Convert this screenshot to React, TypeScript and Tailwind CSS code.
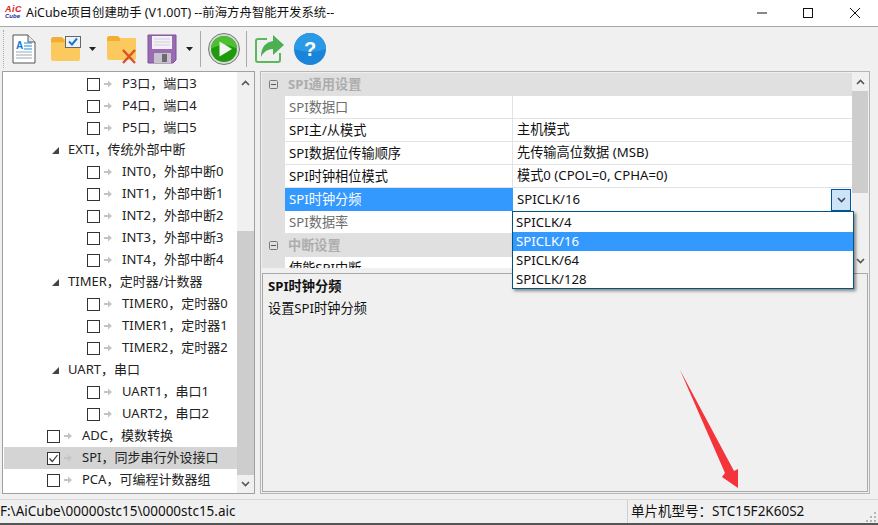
import React from 'react';

const font = 'font-["Noto_Sans","Noto_Sans_CJK_SC",sans-serif]';

type TreeRow = { label: string; level: 0 | 1 | 2; checked?: boolean; selected?: boolean };

const treeRows: TreeRow[] = [
  { label: 'P3口，端口3', level: 2 },
  { label: 'P4口，端口4', level: 2 },
  { label: 'P5口，端口5', level: 2 },
  { label: 'EXTI，传统外部中断', level: 0 },
  { label: 'INT0，外部中断0', level: 2 },
  { label: 'INT1，外部中断1', level: 2 },
  { label: 'INT2，外部中断2', level: 2 },
  { label: 'INT3，外部中断3', level: 2 },
  { label: 'INT4，外部中断4', level: 2 },
  { label: 'TIMER，定时器/计数器', level: 0 },
  { label: 'TIMER0，定时器0', level: 2 },
  { label: 'TIMER1，定时器1', level: 2 },
  { label: 'TIMER2，定时器2', level: 2 },
  { label: 'UART，串口', level: 0 },
  { label: 'UART1，串口1', level: 2 },
  { label: 'UART2，串口2', level: 2 },
  { label: 'ADC，模数转换', level: 1 },
  { label: 'SPI，同步串行外设接口', level: 1, checked: true, selected: true },
  { label: 'PCA，可编程计数器组', level: 1 },
];

function Chevron({ up, className }: { up?: boolean; className?: string }) {
  return (
    <svg width="9" height="6" viewBox="0 0 9 6" className={className}>
      <path d={up ? 'M1 5L4.5 1.5L8 5' : 'M1 1L4.5 4.5L8 1'} fill="none" stroke="currentColor" strokeWidth="1.6" />
    </svg>
  );
}

function Caret({ className }: { className?: string }) {
  return (
    <svg width="7" height="4" viewBox="0 0 7 4" className={className}>
      <path d="M0 0H7L3.5 4Z" fill="#222" />
    </svg>
  );
}

function RowArrow() {
  return (
    <svg width="8" height="8" viewBox="0 0 8 8">
      <path d="M0 3H4V0.5L8 4L4 7.5V5H0Z" fill="#c4c4c4" />
    </svg>
  );
}

function CheckBox({ checked }: { checked?: boolean }) {
  return (
    <span className="w-[13px] h-[13px] border border-[#333] bg-white flex items-center justify-center shrink-0">
      {checked && (
        <svg width="11" height="11" viewBox="0 0 11 11">
          <path d="M1.5 5.5L4.3 8.5L9.5 2" fill="none" stroke="#333" strokeWidth="1.2" />
        </svg>
      )}
    </span>
  );
}

function Tree() {
  return (
    <div className="w-[253px] h-[423px] bg-white border border-[#a0a0a0] flex">
      <div className="w-[234px] pt-[1px] pl-[1px] overflow-hidden">
        {treeRows.map((r) => (
          <div key={r.label} className={`h-[22px] flex items-center text-[13px] text-[#222] whitespace-nowrap ${r.selected ? 'bg-[#d4d4d4]' : ''}`}>
            {r.level === 0 && (
              <>
                <svg width="7" height="7" viewBox="0 0 7 7" className="ml-[48px] mr-[9px] shrink-0">
                  <path d="M7 0V7H0Z" fill="#444" />
                </svg>
                <span>{r.label}</span>
              </>
            )}
            {r.level !== 0 && (
              <>
                <span className={r.level === 2 ? 'ml-[83px]' : 'ml-[43px]'}>
                  <CheckBox checked={r.checked} />
                </span>
                <span className="ml-[4px] mr-[10px] flex"><RowArrow /></span>
                <span>{r.label}</span>
              </>
            )}
          </div>
        ))}
      </div>
      <div className="w-[17px] bg-[#f0f0f0] flex flex-col text-[#555]">
        <div className="h-[21px] flex items-center justify-center"><Chevron up /></div>
        <div className="h-[138px]" />
        <div className="h-[244px] bg-[#cdcdcd]" />
        <div className="flex-1 flex items-center justify-center"><Chevron /></div>
      </div>
    </div>
  );
}

function GroupRow({ label }: { label: string }) {
  return (
    <div className="h-[23px] flex items-center bg-[#e0e0e0]">
      <span className="w-[23px] flex justify-center">
        <svg width="9" height="9" viewBox="0 0 9 9">
          <rect x="0.5" y="0.5" width="8" height="8" rx="1" fill="none" stroke="#777" />
          <path d="M2 4.5H7" stroke="#555" />
        </svg>
      </span>
      <span className="pl-[3px] font-bold text-[#adadad]">{label}</span>
    </div>
  );
}

function PropRow({ name, value, dim }: { name: string; value?: string; dim?: boolean }) {
  return (
    <div className="h-[23px] flex bg-[#e0e0e0]">
      <div className="w-[23px]" />
      <div className={`w-[228px] pl-[4px] pt-[1px] bg-white border-b border-[#e3e3e3] border-r flex items-center ${dim ? 'text-[#6d6d6d]' : 'text-[#111]'}`}>{name}</div>
      <div className="flex-1 pl-[4px] bg-white border-b border-[#e3e3e3] flex items-center text-[#111]">{value}</div>
    </div>
  );
}

function PropertyGrid() {
  return (
    <div className="flex h-[195px] overflow-hidden">
      <div className="w-[591px] text-[13.2px] whitespace-nowrap">
        <GroupRow label="SPI通用设置" />
        <PropRow name="SPI数据口" dim />
        <PropRow name="SPI主/从模式" value="主机模式" />
        <PropRow name="SPI数据位传输顺序" value="先传输高位数据 (MSB)" />
        <PropRow name="SPI时钟相位模式" value="模式0 (CPOL=0, CPHA=0)" />
        <div className="h-[23px] flex bg-[#e0e0e0]">
          <div className="w-[23px]" />
          <div className="w-[228px] pl-[4px] bg-[#3399ff] text-white flex items-center">SPI时钟分频</div>
          <div className="flex-1 pl-[4px] bg-white flex items-center justify-between text-[#111]">
            <span>SPICLK/16</span>
            <span className="w-[20px] h-[22px] bg-[#cce4f7] border border-[#005499] flex items-center justify-center text-[#445] mr-[1px]">
              <Chevron />
            </span>
          </div>
        </div>
        <PropRow name="SPI数据率" dim />
        <GroupRow label="中断设置" />
        <PropRow name="使能SPI中断" />
      </div>
      <div className="w-[16px] bg-[#f0f0f0] flex flex-col text-[#555]">
        <div className="h-[18px] flex items-center justify-center"><Chevron up /></div>
        <div className="h-[102px] bg-[#cdcdcd]" />
        <div className="flex-1 flex items-end justify-center pb-[4px]"><Chevron /></div>
      </div>
    </div>
  );
}

function DropdownList() {
  const items = ['SPICLK/4', 'SPICLK/16', 'SPICLK/64', 'SPICLK/128'];
  return (
    <div className="absolute left-[512px] top-[211px] w-[342px] h-[78px] pt-[1px] bg-white border border-[#00567d] shadow-[2px_2px_3px_rgba(0,0,0,0.45)] text-[13.2px] text-[#111]">
      {items.map((t, i) => (
        <div key={t} className={`h-[19px] pl-[3px] flex items-center ${i === 1 ? 'bg-[#3399ff] text-white' : ''}`}>{t}</div>
      ))}
    </div>
  );
}

function Toolbar() {
  return (
    <div className="h-[44px] flex items-center bg-[#f0f0f0] pl-[3px]">
      <div className="w-[1px] h-[38px] border-l border-dotted border-[#aaa] mr-[8px]" />
      {/* new file */}
      <svg width="24" height="30" viewBox="0 0 24 30">
        <path d="M1 1H16L23 8V29H1Z" fill="#fff" stroke="#555" />
        <path d="M16 1V8H23" fill="#e8e8e8" stroke="#555" />
        <text x="4" y="15" fontSize="10" fill="#1976d2" fontWeight="bold" fontFamily="Liberation Sans">A</text>
        <path d="M12 9H20M12 12H20M12 15H20" stroke="#1e88e5" />
        <path d="M4 18H20M4 21H20M4 24H20" stroke="#9aa7b5" />
      </svg>
      {/* open project */}
      <svg width="30" height="26" viewBox="0 0 30 26" className="ml-[15px]">
        <path d="M0 4Q0 1 3 1H9Q12 1 13 3H29V23Q29 25 27 25H2Q0 25 0 23Z" fill="#fbc95d" />
        <path d="M0 6H29" stroke="#f6b73c" strokeWidth="1" />
        <path d="M0 4Q0 1 3 1H9Q12 1 13 4V6H0Z" fill="#f2ae30" />
        <rect x="14.5" y="0.5" width="15" height="11" fill="#eef3f7" stroke="#666" />
        <path d="M18 5.5L21 8.5L26 2.5" fill="none" stroke="#1976d2" strokeWidth="2" />
      </svg>
      <Caret className="ml-[8px] mr-[5px]" />
      {/* close project */}
      <svg width="30" height="30" viewBox="0 0 30 30" className="ml-[6px]">
        <path d="M0 5Q0 2 3 2H9Q12 2 13 4H29V24Q29 26 27 26H2Q0 26 0 24Z" fill="#fbc95d" />
        <path d="M0 5Q0 2 3 2H9Q12 2 13 5V7H0Z" fill="#f2ae30" />
        <path d="M16 16L28 29M28 16L16 29" stroke="#d9502a" strokeWidth="2.4" />
      </svg>
      {/* save */}
      <svg width="30" height="30" viewBox="0 0 30 30" className="ml-[10px]">
        <path d="M1 1H29V26L26 29H1Z" fill="#9a6bb5" stroke="#7c5296" />
        <rect x="5" y="2" width="20" height="13" fill="#f3f1f6" />
        <path d="M7 5H23M7 8H23M7 11H23" stroke="#d5cde0" />
        <rect x="7" y="19" width="17" height="10" fill="#c7c3cb" />
        <rect x="15" y="20" width="5" height="8" fill="#6d6a73" />
      </svg>
      <Caret className="ml-[9px] mr-[5px]" />
      <div className="w-[1px] h-[36px] bg-[#a9a9a9] ml-[2px] mr-[7px]" />
      {/* run */}
      <svg width="32" height="32" viewBox="0 0 32 32">
        <circle cx="16" cy="16" r="15.5" fill="#d8dcd8" stroke="#777" />
        <circle cx="16" cy="16" r="13" fill="#1f9a0c" />
        <path d="M3 16A13 13 0 0 1 29 16Q16 8 3 16Z" fill="#4cbf34" />
        <path d="M11.5 8.5L24 16L11.5 23.5Z" fill="#f2f6ee" />
      </svg>
      <div className="w-[1px] h-[36px] bg-[#a9a9a9] ml-[6px] mr-[8px]" />
      {/* export */}
      <svg width="30" height="30" viewBox="0 0 30 30">
        <path d="M12 5H3Q1 5 1 7V26Q1 28 3 28H23Q25 28 25 26V19" fill="none" stroke="#5cb85c" strokeWidth="2" />
        <path d="M18 1L29 11L18 21V15Q10 15 6 23Q6 9 18 7Z" fill="#4caf50" />
      </svg>
      {/* help */}
      <svg width="32" height="32" viewBox="0 0 32 32" className="ml-[9px]">
        <circle cx="16" cy="16" r="16" fill="#1a84d8" />
        <path d="M0 16A16 16 0 0 1 32 16Q16 22 0 16Z" fill="#2b9ae6" />
        <text x="16" y="23" textAnchor="middle" fontSize="20" fontWeight="bold" fill="#fff" fontFamily="Liberation Sans">?</text>
      </svg>
    </div>
  );
}

export default function App() {
  return (
    <div className={`relative w-[878px] h-[525px] overflow-hidden bg-[#f0f0f0] flex flex-col ${font}`}>
      {/* title bar */}
      <div className="h-[27px] bg-white border-b border-[#a8a8a8] flex items-center shrink-0">
        <div className="w-[26px] pl-[5px] leading-[7px] font-bold italic text-[#d8261c] text-[9px] tracking-[0.5px] font-['Liberation_Sans',sans-serif]">
          AiC
          <div className="text-[6px] tracking-normal text-[#1a2a9c]">Cube</div>
        </div>
        <span className="text-[12.4px] text-[#111] whitespace-nowrap">AiCube项目创建助手 (V1.00T) --前海方舟智能开发系统--</span>
        <div className="ml-auto flex items-center text-[#111]">
          <span className="w-[46px] flex justify-center">
            <svg width="10" height="10" viewBox="0 0 10 10"><path d="M0 5H10" stroke="currentColor" /></svg>
          </span>
          <span className="w-[46px] flex justify-center">
            <svg width="10" height="10" viewBox="0 0 10 10"><rect x="0.5" y="0.5" width="9" height="9" fill="none" stroke="currentColor" /></svg>
          </span>
          <span className="w-[47px] flex justify-center">
            <svg width="10" height="10" viewBox="0 0 10 10"><path d="M0 0L10 10M10 0L0 10" stroke="currentColor" /></svg>
          </span>
        </div>
      </div>

      <Toolbar />

      {/* main area */}
      <div className="h-[428px] shrink-0 flex pl-[2px] gap-[5px]">
        <Tree />
        <div className="w-[610px] h-[423px] border border-[#b5b5b5] p-[1px] flex flex-col">
          <PropertyGrid />
          <div className="mt-[5px] flex-1 border border-[#a9a9a9] pl-[5px] pt-[1px] text-[13.2px] text-[#111] leading-[22px]">
            <div className="font-bold">SPI时钟分频</div>
            <div>设置SPI时钟分频</div>
          </div>
        </div>
      </div>

      {/* status bar */}
      <div className="flex-1 border-t border-[#d7d7d7] border-b-2 border-b-[#555] flex items-center text-[13.5px] text-[#111] whitespace-nowrap relative">
        <span className="w-[627px]">F:\AiCube\00000stc15\00000stc15.aic</span>
        <span className="border-l border-[#d0d0d0] pl-[3px] h-full flex items-center">单片机型号：STC15F2K60S2</span>
        <svg width="11" height="11" viewBox="0 0 11 11" className="absolute right-[1px] bottom-[1px]">
          <path d="M8 1h2v2H8zM4 5h2v2H4zM8 5h2v2H8zM0 9h2v2H0zM4 9h2v2H4zM8 9h2v2H8z" fill="#b5b5b5" />
        </svg>
      </div>

      <DropdownList />

      {/* annotation arrow */}
      <svg width="70" height="125" viewBox="0 0 70 125" className="absolute left-[675px] top-[368px]">
        <path d="M5 2L59 103L63 101L63 120L47 109L50 105Z" fill="#f4333a" />
      </svg>
    </div>
  );
}
